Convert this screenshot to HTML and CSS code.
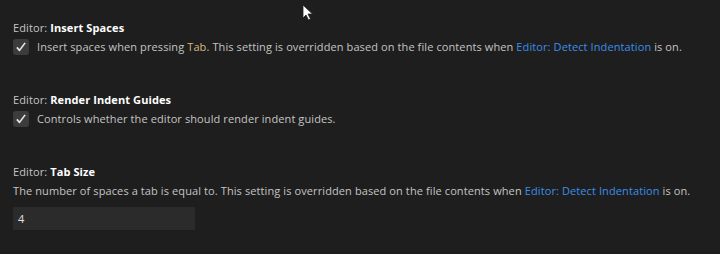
FILE: index.html
```html
<!DOCTYPE html>
<html lang="en">

<head>
    <meta charset="UTF-8">
    <title>Settings</title>
    <link rel="stylesheet" href="styles.css">
</head>

<body>
    <div class="settings">
        <div class="setting">
            <div class="setting-title"><span class="category">Editor: </span><span class="label">Insert Spaces</span></div>
            <div class="setting-bool">
                <span class="checkbox">
                    <svg width="12" height="12" viewBox="0 0 16 16"><path d="M2.5 8.5 L6 12.5 L13.5 2.5" fill="none" stroke="#e8e8e8" stroke-width="2.2" stroke-linejoin="round"/></svg>
                </span>
                <span class="desc">Insert spaces when pressing <code>Tab</code>. This setting is overridden based on the file contents when <a href="#">Editor: Detect Indentation</a> is on.</span>
            </div>
        </div>

        <div class="setting">
            <div class="setting-title"><span class="category">Editor: </span><span class="label">Render Indent Guides</span></div>
            <div class="setting-bool">
                <span class="checkbox">
                    <svg width="12" height="12" viewBox="0 0 16 16"><path d="M2.5 8.5 L6 12.5 L13.5 2.5" fill="none" stroke="#e8e8e8" stroke-width="2.2" stroke-linejoin="round"/></svg>
                </span>
                <span class="desc">Controls whether the editor should render indent guides.</span>
            </div>
        </div>

        <div class="setting">
            <div class="setting-title"><span class="category">Editor: </span><span class="label">Tab Size</span></div>
            <div class="desc">The number of spaces a tab is equal to. This setting is overridden based on the file contents when <a href="#">Editor: Detect Indentation</a> is on.</div>
            <div class="number-input">4</div>
        </div>
    </div>

    <!-- mouse pointer from the screenshot -->
    <svg class="pointer" width="12" height="18" viewBox="0 0 12 18">
        <path d="M1 1 L1 14 L4 11 L6.5 16 L8.5 15 L6 10 L10.5 10 Z" fill="#ffffff" stroke="#222" stroke-width="0.8"/>
    </svg>
</body>

</html>
```

FILE: styles.css
```css
body {
    margin: 0;
    background: #1e1e1e;
    color: #cccccc;
    font-family: "Open Sans", "Noto Sans", sans-serif;
    font-size: 11px;
    letter-spacing: 0.1px;
}

.settings {
    padding: 20px 13px 0 13px;
}

.setting {
    margin-bottom: 36px;
}

.setting-title {
    line-height: 16px;
    margin-bottom: 2px;
}

.category {
    color: #c5c5c5;
}

.label {
    color: #ffffff;
    font-weight: 700;
}

/* checkbox rows */
.setting-bool {
    display: flex;
    align-items: center;
    gap: 8px;
}

.checkbox {
    width: 16px;
    height: 16px;
    background: #3c3c3c;
    border-radius: 3px;
    display: flex;
    align-items: center;
    justify-content: center;
}

.desc {
    color: #c4c4c4;
    line-height: 18px;
}

.desc code {
    font-family: inherit;
    color: #d7ba7d;
}

.desc a {
    color: #3b8eea;
    text-decoration: none;
}

.number-input {
    width: 177px;
    height: 23px;
    margin-top: 7px;
    padding-left: 5px;
    background: #2b2b2b;
    color: #e0e0e0;
    line-height: 23px;
}

.pointer {
    position: absolute;
    left: 302px;
    top: 4px;
}
```
